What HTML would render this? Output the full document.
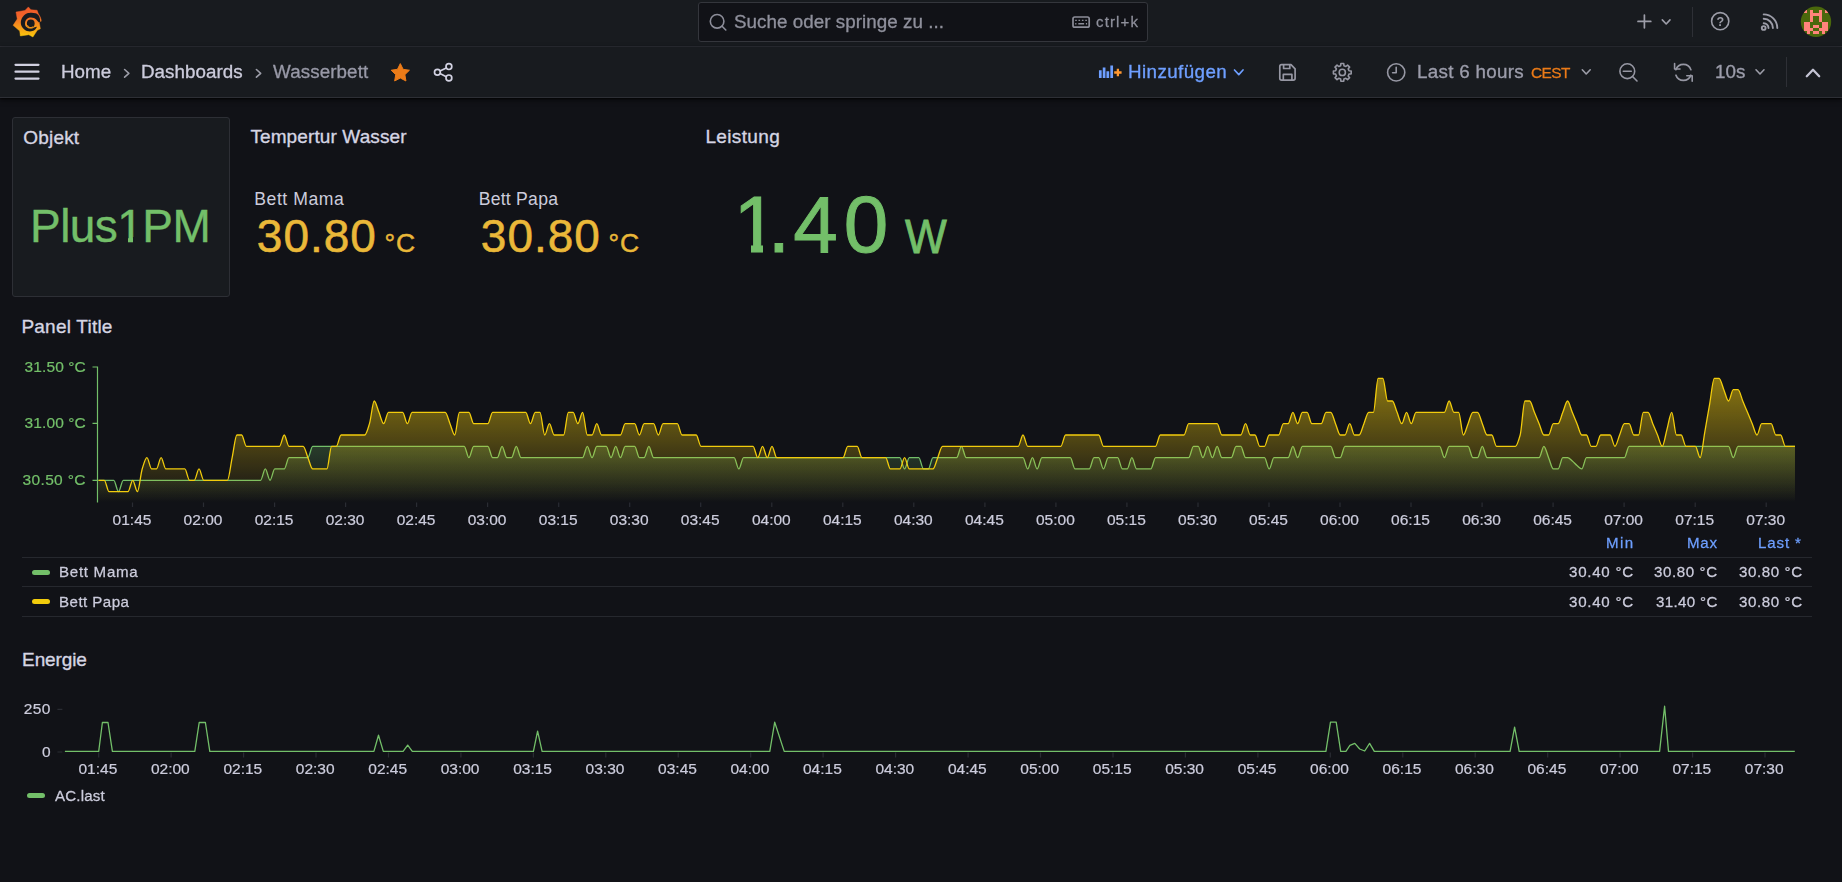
<!DOCTYPE html>
<html lang="de">
<head>
<meta charset="utf-8">
<title>Wasserbett - Dashboards - Grafana</title>
<style>
*{box-sizing:border-box;margin:0;padding:0}
html,body{width:1842px;height:882px;overflow:hidden;background:#111217}
body{font-family:"Liberation Sans",Arial,sans-serif;color:#ccccdc;position:relative}
.abs{position:absolute;white-space:nowrap;line-height:1}
#topbar{position:absolute;left:0;top:0;width:1842px;height:47px;background:#181b1f;border-bottom:1px solid #2d2f35}
#toolbar{position:absolute;left:0;top:47px;width:1842px;height:51px;background:#181b1f;border-bottom:1px solid #2d2f35;box-shadow:0 1px 2px rgba(0,0,0,.7),0 2px 6px rgba(0,0,0,.45)}
#search{position:absolute;left:698px;top:2px;width:450px;height:40px;background:#111217;border:1px solid #34363c;border-radius:3px}
.t{color:#ccccdc}
.dim{color:#9a9ba6}
svg{position:absolute;left:0;top:0;overflow:visible}
.panel{position:absolute;left:12px;top:117px;width:218px;height:180px;background:#181b1f;border:1px solid #2d2f35;border-radius:3px}
.ptitle{font-size:18px;color:#d5d5e3;-webkit-text-stroke:.3px #d5d5e3}
.ax{font-size:15.5px;fill:#ccccdc;stroke:#ccccdc;stroke-width:.22px;font-family:"Liberation Sans",Arial,sans-serif}
.axg{font-size:15.5px;fill:#73bf69;stroke:#73bf69;stroke-width:.22px;font-family:"Liberation Sans",Arial,sans-serif}
.hr{position:absolute;left:22px;width:1790px;height:1px;background:#26282e}
.lg{font-size:15.6px;color:#ccccdc}
.lv{font-size:15.6px;color:#ccccdc;text-align:right;width:120px}
.lh{font-size:15.6px;color:#6e9fff;text-align:right;width:120px;-webkit-text-stroke:.3px #6e9fff}
.pill{position:absolute;width:18px;height:5.4px;border-radius:3px}
.ic{fill:none;stroke:#a4a5b0;stroke-width:1.7;stroke-linecap:round;stroke-linejoin:round}
</style>
</head>
<body>
<div id="topbar"></div>
<div id="toolbar"></div>
<div id="search"></div>

<div class="panel"></div>
<div class="hr" style="top:557px"></div>
<div class="hr" style="top:586px"></div>
<div class="hr" style="top:616px"></div>
<div class="pill" style="left:32px;top:570px;background:#73bf69"></div>
<div class="pill" style="left:32px;top:599px;background:#f2cc0c"></div>
<div class="pill" style="left:27px;top:792.7px;background:#73bf69"></div>
<div class="abs" style="left:61.4px;top:63.0px;font-size:18.8px;color:#ccccdc;letter-spacing:0.03px;-webkit-text-stroke:0.32px #ccccdc;will-change:transform;">Home</div>
<div class="abs" style="left:141.1px;top:63.0px;font-size:18.8px;color:#ccccdc;letter-spacing:0.04px;-webkit-text-stroke:0.32px #ccccdc;will-change:transform;">Dashboards</div>
<div class="abs" style="left:272.8px;top:63.0px;font-size:18.8px;color:#9899a7;letter-spacing:0.10px;-webkit-text-stroke:0.32px #9899a7;will-change:transform;">Wasserbett</div>
<div class="abs" style="left:733.5px;top:13.0px;font-size:18.8px;color:#8f909c;letter-spacing:0.05px;-webkit-text-stroke:0.32px #8f909c;will-change:transform;">Suche oder springe zu ...</div>
<div class="abs" style="left:1096.1px;top:14.0px;font-size:15px;color:#8f909c;letter-spacing:1.14px;-webkit-text-stroke:0.26px #8f909c;will-change:transform;">ctrl+k</div>
<div class="abs" style="left:1128.4px;top:63.0px;font-size:18.8px;color:#6e9fff;letter-spacing:0.41px;-webkit-text-stroke:0.34px #6e9fff;will-change:transform;">Hinzufügen</div>
<div class="abs" style="left:1417.2px;top:63.0px;font-size:18.8px;color:#9c9dab;letter-spacing:0.30px;-webkit-text-stroke:0.34px #9c9dab;will-change:transform;">Last 6 hours</div>
<div class="abs" style="left:1530.7px;top:65.0px;font-size:15.4px;color:#eb7b18;letter-spacing:-0.53px;-webkit-text-stroke:0.28px #eb7b18;will-change:transform;">CEST</div>
<div class="abs" style="left:1714.5px;top:63.0px;font-size:18.8px;color:#9c9dab;-webkit-text-stroke:0.34px #9c9dab;will-change:transform;">10s</div>
<div class="abs" style="left:23.3px;top:128.0px;font-size:19px;color:#d5d5e3;letter-spacing:0.18px;-webkit-text-stroke:0.34px #d5d5e3;">Objekt</div>
<div class="abs" style="left:30.0px;top:203.0px;font-size:46px;color:#73bf69;letter-spacing:-0.55px;-webkit-text-stroke:0.37px #73bf69;">Plus1PM</div>
<div style="position:absolute;left:119px;top:237px;width:9.3px;height:6.5px;background:#181b1f"></div>
<div style="position:absolute;left:133.4px;top:237px;width:9px;height:6.5px;background:#181b1f"></div>
<div class="abs" style="left:250.4px;top:127.0px;font-size:19px;color:#d5d5e3;letter-spacing:0.11px;-webkit-text-stroke:0.34px #d5d5e3;">Tempertur Wasser</div>
<div class="abs" style="left:254.3px;top:191.0px;font-size:17.6px;color:#ccccdc;letter-spacing:0.55px;">Bett Mama</div>
<div class="abs" style="left:478.7px;top:191.0px;font-size:17.6px;color:#ccccdc;letter-spacing:0.25px;">Bett Papa</div>
<div class="abs" style="left:256.8px;top:213.0px;font-size:46px;color:#eab839;letter-spacing:1.00px;-webkit-text-stroke:0.55px #eab839;">30.80<span style="position:absolute;left:127.7px;top:17.0px;font-size:26.5px;letter-spacing:0.80px;line-height:1;-webkit-text-stroke:0.48px #eab839;"> °C</span></div>
<div class="abs" style="left:480.8px;top:213.0px;font-size:46px;color:#eab839;letter-spacing:1.00px;-webkit-text-stroke:0.55px #eab839;">30.80<span style="position:absolute;left:127.7px;top:17.0px;font-size:26.5px;letter-spacing:0.80px;line-height:1;-webkit-text-stroke:0.48px #eab839;"> °C</span></div>
<div class="abs" style="left:705.4px;top:127.0px;font-size:19px;color:#d5d5e3;letter-spacing:0.37px;-webkit-text-stroke:0.34px #d5d5e3;">Leistung</div>
<div class="abs" style="left:733.5px;top:185.0px;font-size:80px;color:#73bf69;-webkit-text-stroke:0.96px #73bf69;"><span style="position:absolute;left:3.2px;top:58.5px;width:14.6px;height:11px;background:#111217;z-index:1"></span><span style="position:absolute;left:29.2px;top:58.5px;width:14px;height:11px;background:#111217;z-index:1"></span>1<span style="position:relative;z-index:2"><span style="margin-left:-10.29px">.</span><span style="margin-left:3.37px">4</span><span style="margin-left:6.01px">0</span></span><span style="position:absolute;left:171.7px;top:28.0px;font-size:47.6px;letter-spacing:0.00px;line-height:1;-webkit-text-stroke:0.86px #73bf69;transform:scaleX(0.93);transform-origin:0 0;"> W</span></div>
<div class="abs" style="left:21.4px;top:317.0px;font-size:19px;color:#d5d5e3;letter-spacing:0.23px;-webkit-text-stroke:0.34px #d5d5e3;">Panel Title</div>
<div class="abs" style="left:22.1px;top:650.0px;font-size:19px;color:#d5d5e3;letter-spacing:-0.13px;-webkit-text-stroke:0.34px #d5d5e3;">Energie</div>
<div class="abs" style="left:58.7px;top:564.0px;font-size:15.1px;color:#ccccdc;letter-spacing:0.71px;-webkit-text-stroke:0.26px #ccccdc;will-change:transform;">Bett Mama</div>
<div class="abs" style="left:59.2px;top:594.0px;font-size:15.1px;color:#ccccdc;letter-spacing:0.46px;-webkit-text-stroke:0.26px #ccccdc;will-change:transform;">Bett Papa</div>
<div class="abs" style="left:55.1px;top:788.0px;font-size:15.1px;color:#ccccdc;letter-spacing:0.19px;-webkit-text-stroke:0.26px #ccccdc;will-change:transform;">AC.last</div>
<div class="abs" style="left:1606.2px;top:535.0px;font-size:15.1px;color:#6e9fff;letter-spacing:1.40px;-webkit-text-stroke:0.27px #6e9fff;will-change:transform;">Min</div>
<div class="abs" style="left:1686.7px;top:535.0px;font-size:15.1px;color:#6e9fff;letter-spacing:0.75px;-webkit-text-stroke:0.27px #6e9fff;will-change:transform;">Max</div>
<div class="abs" style="left:1757.9px;top:535.0px;font-size:15.1px;color:#6e9fff;letter-spacing:0.88px;-webkit-text-stroke:0.27px #6e9fff;will-change:transform;">Last *</div>
<div class="abs" style="left:1569.3px;top:564.0px;font-size:15.1px;color:#ccccdc;letter-spacing:0.74px;-webkit-text-stroke:0.26px #ccccdc;will-change:transform;">30.40 °C</div>
<div class="abs" style="left:1654.4px;top:564.0px;font-size:15.1px;color:#ccccdc;letter-spacing:0.59px;-webkit-text-stroke:0.26px #ccccdc;will-change:transform;">30.80 °C</div>
<div class="abs" style="left:1738.6px;top:564.0px;font-size:15.1px;color:#ccccdc;letter-spacing:0.59px;-webkit-text-stroke:0.26px #ccccdc;will-change:transform;">30.80 °C</div>
<div class="abs" style="left:1569.3px;top:594.0px;font-size:15.1px;color:#ccccdc;letter-spacing:0.74px;-webkit-text-stroke:0.26px #ccccdc;will-change:transform;">30.40 °C</div>
<div class="abs" style="left:1656.2px;top:594.0px;font-size:15.1px;color:#ccccdc;letter-spacing:0.34px;-webkit-text-stroke:0.26px #ccccdc;will-change:transform;">31.40 °C</div>
<div class="abs" style="left:1738.6px;top:594.0px;font-size:15.1px;color:#ccccdc;letter-spacing:0.59px;-webkit-text-stroke:0.26px #ccccdc;will-change:transform;">30.80 °C</div>
<svg id="charts" width="1842" height="882">
<defs>
<linearGradient id="gy" gradientUnits="userSpaceOnUse" x1="0" y1="366" x2="0" y2="502.5"><stop offset="0" stop-color="#F2CC0C" stop-opacity="0.6"/><stop offset="1" stop-color="#F2CC0C" stop-opacity="0"/></linearGradient>
<linearGradient id="gg" gradientUnits="userSpaceOnUse" x1="0" y1="366" x2="0" y2="502.5"><stop offset="0" stop-color="#73BF69" stop-opacity="0.6"/><stop offset="1" stop-color="#73BF69" stop-opacity="0"/></linearGradient>
</defs>
<path d="M98.50,480.30H99.57H113.78C115.35,480.30 116.93,491.63 118.51,491.63C120.09,491.63 121.67,480.30 123.25,480.30H260.57C262.15,480.30 263.73,468.97 265.31,468.97C266.89,468.97 268.47,480.30 270.04,480.30C271.62,480.30 273.20,468.97 274.78,468.97H284.25C285.83,468.97 287.41,457.64 288.99,457.64H307.93C309.51,457.64 311.08,446.31 312.66,446.31H464.20C465.77,446.31 467.35,457.64 468.93,457.64C470.51,457.64 472.09,446.31 473.67,446.31H487.87C489.45,446.31 491.03,457.64 492.61,457.64H497.34C498.92,457.64 500.50,446.31 502.08,446.31C503.66,446.31 505.24,457.64 506.81,457.64H511.55C513.13,457.64 514.71,446.31 516.29,446.31C517.86,446.31 519.44,457.64 521.02,457.64H582.58C584.16,457.64 585.74,446.31 587.32,446.31C588.89,446.31 590.47,457.64 592.05,457.64C593.63,457.64 595.21,446.31 596.79,446.31H606.26C607.84,446.31 609.41,457.64 610.99,457.64C612.57,457.64 614.15,446.31 615.73,446.31C617.31,446.31 618.89,457.64 620.46,457.64C622.04,457.64 623.62,446.31 625.20,446.31H634.67C636.25,446.31 637.83,457.64 639.41,457.64H644.14C645.72,457.64 647.30,446.31 648.88,446.31C650.45,446.31 652.03,457.64 653.61,457.64H734.11C735.69,457.64 737.27,468.97 738.85,468.97C740.43,468.97 742.01,457.64 743.58,457.64H899.85C901.43,457.64 903.01,468.97 904.59,468.97C906.17,468.97 907.74,457.64 909.32,457.64H918.79C920.37,457.64 921.95,468.97 923.53,468.97H928.27C929.84,468.97 931.42,457.64 933.00,457.64H956.68C958.26,457.64 959.83,446.31 961.41,446.31C962.99,446.31 964.57,457.64 966.15,457.64H1022.97C1024.55,457.64 1026.13,468.97 1027.71,468.97C1029.29,468.97 1030.87,457.64 1032.44,457.64C1034.02,457.64 1035.60,468.97 1037.18,468.97C1038.76,468.97 1040.34,457.64 1041.91,457.64H1070.33C1071.91,457.64 1073.48,468.97 1075.06,468.97H1089.27C1090.85,468.97 1092.43,457.64 1094.00,457.64H1098.74C1100.32,457.64 1101.90,468.97 1103.47,468.97C1105.05,468.97 1106.63,457.64 1108.21,457.64H1117.68C1119.26,457.64 1120.84,468.97 1122.42,468.97H1127.15C1128.73,468.97 1130.31,457.64 1131.89,457.64C1133.47,457.64 1135.04,468.97 1136.62,468.97H1150.83C1152.41,468.97 1153.99,457.64 1155.56,457.64H1188.71C1190.29,457.64 1191.87,446.31 1193.45,446.31H1198.18C1199.76,446.31 1201.34,457.64 1202.92,457.64C1204.50,457.64 1206.08,446.31 1207.65,446.31C1209.23,446.31 1210.81,457.64 1212.39,457.64C1213.97,457.64 1215.55,446.31 1217.12,446.31C1218.70,446.31 1220.28,457.64 1221.86,457.64H1231.33C1232.91,457.64 1234.49,446.31 1236.07,446.31H1240.80C1242.38,446.31 1243.96,457.64 1245.54,457.64H1264.48C1266.06,457.64 1267.64,468.97 1269.21,468.97C1270.79,468.97 1272.37,457.64 1273.95,457.64H1288.16C1289.73,457.64 1291.31,446.31 1292.89,446.31C1294.47,446.31 1296.05,457.64 1297.63,457.64C1299.20,457.64 1300.78,446.31 1302.36,446.31H1330.77C1332.35,446.31 1333.93,457.64 1335.51,457.64H1340.24C1341.82,457.64 1343.40,446.31 1344.98,446.31H1439.69C1441.27,446.31 1442.85,457.64 1444.42,457.64C1446.00,457.64 1447.58,446.31 1449.16,446.31H1468.10C1469.68,446.31 1471.26,457.64 1472.84,457.64H1477.57C1479.15,457.64 1480.73,446.31 1482.31,446.31C1483.89,446.31 1485.46,457.64 1487.04,457.64H1539.13C1540.71,457.64 1542.29,446.31 1543.87,446.31C1545.45,446.31 1547.02,453.86 1548.60,457.64C1550.18,461.42 1551.76,468.97 1553.34,468.97H1558.07C1559.65,468.97 1561.23,457.64 1562.81,457.64H1567.54C1569.12,457.64 1570.70,459.74 1572.28,461.04C1573.86,462.33 1575.44,464.28 1577.01,465.57C1578.59,466.87 1580.17,468.97 1581.75,468.97C1583.33,468.97 1584.91,457.64 1586.49,457.64H1624.37C1625.95,457.64 1627.53,446.31 1629.10,446.31H1728.55C1730.13,446.31 1731.70,457.64 1733.28,457.64C1734.86,457.64 1736.44,446.31 1738.02,446.31H1794.84H1795.00V502.5H98.50Z" fill="url(#gg)"/>
<path d="M98.50,480.30H99.57H113.78C115.35,480.30 116.93,491.63 118.51,491.63C120.09,491.63 121.67,480.30 123.25,480.30H260.57C262.15,480.30 263.73,468.97 265.31,468.97C266.89,468.97 268.47,480.30 270.04,480.30C271.62,480.30 273.20,468.97 274.78,468.97H284.25C285.83,468.97 287.41,457.64 288.99,457.64H307.93C309.51,457.64 311.08,446.31 312.66,446.31H464.20C465.77,446.31 467.35,457.64 468.93,457.64C470.51,457.64 472.09,446.31 473.67,446.31H487.87C489.45,446.31 491.03,457.64 492.61,457.64H497.34C498.92,457.64 500.50,446.31 502.08,446.31C503.66,446.31 505.24,457.64 506.81,457.64H511.55C513.13,457.64 514.71,446.31 516.29,446.31C517.86,446.31 519.44,457.64 521.02,457.64H582.58C584.16,457.64 585.74,446.31 587.32,446.31C588.89,446.31 590.47,457.64 592.05,457.64C593.63,457.64 595.21,446.31 596.79,446.31H606.26C607.84,446.31 609.41,457.64 610.99,457.64C612.57,457.64 614.15,446.31 615.73,446.31C617.31,446.31 618.89,457.64 620.46,457.64C622.04,457.64 623.62,446.31 625.20,446.31H634.67C636.25,446.31 637.83,457.64 639.41,457.64H644.14C645.72,457.64 647.30,446.31 648.88,446.31C650.45,446.31 652.03,457.64 653.61,457.64H734.11C735.69,457.64 737.27,468.97 738.85,468.97C740.43,468.97 742.01,457.64 743.58,457.64H899.85C901.43,457.64 903.01,468.97 904.59,468.97C906.17,468.97 907.74,457.64 909.32,457.64H918.79C920.37,457.64 921.95,468.97 923.53,468.97H928.27C929.84,468.97 931.42,457.64 933.00,457.64H956.68C958.26,457.64 959.83,446.31 961.41,446.31C962.99,446.31 964.57,457.64 966.15,457.64H1022.97C1024.55,457.64 1026.13,468.97 1027.71,468.97C1029.29,468.97 1030.87,457.64 1032.44,457.64C1034.02,457.64 1035.60,468.97 1037.18,468.97C1038.76,468.97 1040.34,457.64 1041.91,457.64H1070.33C1071.91,457.64 1073.48,468.97 1075.06,468.97H1089.27C1090.85,468.97 1092.43,457.64 1094.00,457.64H1098.74C1100.32,457.64 1101.90,468.97 1103.47,468.97C1105.05,468.97 1106.63,457.64 1108.21,457.64H1117.68C1119.26,457.64 1120.84,468.97 1122.42,468.97H1127.15C1128.73,468.97 1130.31,457.64 1131.89,457.64C1133.47,457.64 1135.04,468.97 1136.62,468.97H1150.83C1152.41,468.97 1153.99,457.64 1155.56,457.64H1188.71C1190.29,457.64 1191.87,446.31 1193.45,446.31H1198.18C1199.76,446.31 1201.34,457.64 1202.92,457.64C1204.50,457.64 1206.08,446.31 1207.65,446.31C1209.23,446.31 1210.81,457.64 1212.39,457.64C1213.97,457.64 1215.55,446.31 1217.12,446.31C1218.70,446.31 1220.28,457.64 1221.86,457.64H1231.33C1232.91,457.64 1234.49,446.31 1236.07,446.31H1240.80C1242.38,446.31 1243.96,457.64 1245.54,457.64H1264.48C1266.06,457.64 1267.64,468.97 1269.21,468.97C1270.79,468.97 1272.37,457.64 1273.95,457.64H1288.16C1289.73,457.64 1291.31,446.31 1292.89,446.31C1294.47,446.31 1296.05,457.64 1297.63,457.64C1299.20,457.64 1300.78,446.31 1302.36,446.31H1330.77C1332.35,446.31 1333.93,457.64 1335.51,457.64H1340.24C1341.82,457.64 1343.40,446.31 1344.98,446.31H1439.69C1441.27,446.31 1442.85,457.64 1444.42,457.64C1446.00,457.64 1447.58,446.31 1449.16,446.31H1468.10C1469.68,446.31 1471.26,457.64 1472.84,457.64H1477.57C1479.15,457.64 1480.73,446.31 1482.31,446.31C1483.89,446.31 1485.46,457.64 1487.04,457.64H1539.13C1540.71,457.64 1542.29,446.31 1543.87,446.31C1545.45,446.31 1547.02,453.86 1548.60,457.64C1550.18,461.42 1551.76,468.97 1553.34,468.97H1558.07C1559.65,468.97 1561.23,457.64 1562.81,457.64H1567.54C1569.12,457.64 1570.70,459.74 1572.28,461.04C1573.86,462.33 1575.44,464.28 1577.01,465.57C1578.59,466.87 1580.17,468.97 1581.75,468.97C1583.33,468.97 1584.91,457.64 1586.49,457.64H1624.37C1625.95,457.64 1627.53,446.31 1629.10,446.31H1728.55C1730.13,446.31 1731.70,457.64 1733.28,457.64C1734.86,457.64 1736.44,446.31 1738.02,446.31H1794.84H1795.00" fill="none" stroke="#73BF69" stroke-width="1.3" stroke-linejoin="round"/>
<path d="M98.50,480.30H99.57H104.31C105.88,480.30 107.46,491.63 109.04,491.63H127.98C129.56,491.63 131.14,480.30 132.72,480.30C134.30,480.30 135.87,491.63 137.45,491.63C139.03,491.63 140.61,474.01 142.19,468.97C143.77,463.93 145.35,457.64 146.92,457.64C148.50,457.64 150.08,468.97 151.66,468.97H156.39C157.97,468.97 159.55,457.64 161.13,457.64C162.71,457.64 164.29,468.97 165.87,468.97H184.81C186.39,468.97 187.96,480.30 189.54,480.30H194.28C195.86,480.30 197.43,468.97 199.01,468.97C200.59,468.97 202.17,480.30 203.75,480.30H227.43C229.00,480.30 230.58,465.19 232.16,457.64C233.74,450.09 235.32,434.98 236.90,434.98H241.63C243.21,434.98 244.79,446.31 246.37,446.31H279.52C281.09,446.31 282.67,434.98 284.25,434.98C285.83,434.98 287.41,446.31 288.99,446.31H303.19C304.77,446.31 306.35,453.86 307.93,457.64C309.51,461.42 311.08,468.97 312.66,468.97H326.87C328.45,468.97 330.03,446.31 331.60,446.31H336.34C337.92,446.31 339.50,434.98 341.08,434.98H364.75C366.33,434.98 367.91,428.69 369.49,423.65C371.07,418.61 372.64,400.99 374.22,400.99C375.80,400.99 377.38,408.54 378.96,412.32C380.54,416.10 382.12,423.65 383.69,423.65C385.27,423.65 386.85,412.32 388.43,412.32H402.64C404.21,412.32 405.79,423.65 407.37,423.65C408.95,423.65 410.53,412.32 412.11,412.32H445.25C446.83,412.32 448.41,419.87 449.99,423.65C451.57,427.43 453.15,434.98 454.73,434.98C456.30,434.98 457.88,412.32 459.46,412.32H468.93C470.51,412.32 472.09,423.65 473.67,423.65H487.87C489.45,423.65 491.03,412.32 492.61,412.32H525.76C527.33,412.32 528.91,423.65 530.49,423.65C532.07,423.65 533.65,412.32 535.23,412.32H539.96C541.54,412.32 543.12,434.98 544.70,434.98C546.28,434.98 547.85,423.65 549.43,423.65C551.01,423.65 552.59,434.98 554.17,434.98H563.64C565.22,434.98 566.80,412.32 568.37,412.32H573.11C574.69,412.32 576.27,423.65 577.85,423.65C579.42,423.65 581.00,412.32 582.58,412.32C584.16,412.32 585.74,434.98 587.32,434.98H592.05C593.63,434.98 595.21,423.65 596.79,423.65C598.37,423.65 599.94,434.98 601.52,434.98H620.46C622.04,434.98 623.62,423.65 625.20,423.65H634.67C636.25,423.65 637.83,434.98 639.41,434.98C640.98,434.98 642.56,423.65 644.14,423.65H653.61C655.19,423.65 656.77,434.98 658.35,434.98C659.93,434.98 661.50,423.65 663.08,423.65H677.29C678.87,423.65 680.45,434.98 682.02,434.98H696.23C697.81,434.98 699.39,446.31 700.97,446.31H753.06C754.63,446.31 756.21,457.64 757.79,457.64C759.37,457.64 760.95,446.31 762.53,446.31C764.10,446.31 765.68,457.64 767.26,457.64C768.84,457.64 770.42,446.31 772.00,446.31C773.58,446.31 775.15,457.64 776.73,457.64H843.03C844.61,457.64 846.18,446.31 847.76,446.31H857.23C858.81,446.31 860.39,457.64 861.97,457.64H885.65C887.22,457.64 888.80,468.97 890.38,468.97H899.85C901.43,468.97 903.01,457.64 904.59,457.64C906.17,457.64 907.74,468.97 909.32,468.97H933.00C934.58,468.97 936.16,461.42 937.74,457.64C939.31,453.86 940.89,446.31 942.47,446.31H1018.24C1019.82,446.31 1021.39,434.98 1022.97,434.98C1024.55,434.98 1026.13,446.31 1027.71,446.31H1060.86C1062.43,446.31 1064.01,434.98 1065.59,434.98H1098.74C1100.32,434.98 1101.90,446.31 1103.47,446.31H1155.56C1157.14,446.31 1158.72,434.98 1160.30,434.98H1183.98C1185.56,434.98 1187.13,423.65 1188.71,423.65H1217.12C1218.70,423.65 1220.28,434.98 1221.86,434.98H1240.80C1242.38,434.98 1243.96,423.65 1245.54,423.65C1247.12,423.65 1248.69,434.98 1250.27,434.98H1255.01C1256.59,434.98 1258.16,446.31 1259.74,446.31H1264.48C1266.06,446.31 1267.64,434.98 1269.21,434.98H1278.68C1280.26,434.98 1281.84,423.65 1283.42,423.65H1288.16C1289.73,423.65 1291.31,412.32 1292.89,412.32C1294.47,412.32 1296.05,423.65 1297.63,423.65C1299.20,423.65 1300.78,412.32 1302.36,412.32H1307.10C1308.68,412.32 1310.25,423.65 1311.83,423.65H1321.30C1322.88,423.65 1324.46,412.32 1326.04,412.32H1330.77C1332.35,412.32 1333.93,419.87 1335.51,423.65C1337.09,427.43 1338.67,434.98 1340.24,434.98H1344.98C1346.56,434.98 1348.14,423.65 1349.72,423.65C1351.29,423.65 1352.87,434.98 1354.45,434.98H1359.19C1360.76,434.98 1362.34,427.43 1363.92,423.65C1365.50,419.87 1367.08,412.32 1368.66,412.32H1373.39C1374.97,412.32 1376.55,378.33 1378.13,378.33H1382.86C1384.44,378.33 1386.02,400.99 1387.60,400.99H1392.33C1393.91,400.99 1395.49,408.54 1397.07,412.32C1398.65,416.10 1400.23,423.65 1401.81,423.65C1403.38,423.65 1404.96,412.32 1406.54,412.32C1408.12,412.32 1409.70,423.65 1411.28,423.65C1412.85,423.65 1414.43,412.32 1416.01,412.32H1444.42C1446.00,412.32 1447.58,400.99 1449.16,400.99C1450.74,400.99 1452.32,412.32 1453.89,412.32H1458.63C1460.21,412.32 1461.79,434.98 1463.37,434.98C1464.94,434.98 1466.52,427.43 1468.10,423.65C1469.68,419.87 1471.26,412.32 1472.84,412.32H1477.57C1479.15,412.32 1480.73,419.87 1482.31,423.65C1483.89,427.43 1485.46,434.98 1487.04,434.98H1491.78C1493.36,434.98 1494.93,446.31 1496.51,446.31H1515.45C1517.03,446.31 1518.61,440.65 1520.19,434.98C1521.77,429.32 1523.35,400.99 1524.93,400.99H1529.66C1531.24,400.99 1532.82,408.54 1534.40,412.32C1535.97,416.10 1537.55,419.87 1539.13,423.65C1540.71,427.43 1542.29,434.98 1543.87,434.98H1548.60C1550.18,434.98 1551.76,423.65 1553.34,423.65H1558.07C1559.65,423.65 1561.23,416.10 1562.81,412.32C1564.39,408.54 1565.97,400.99 1567.54,400.99C1569.12,400.99 1570.70,408.54 1572.28,412.32C1573.86,416.10 1575.44,419.87 1577.01,423.65C1578.59,427.43 1580.17,434.98 1581.75,434.98H1586.49C1588.06,434.98 1589.64,446.31 1591.22,446.31H1595.96C1597.53,446.31 1599.11,434.98 1600.69,434.98H1610.16C1611.74,434.98 1613.32,446.31 1614.90,446.31C1616.48,446.31 1618.05,438.76 1619.63,434.98C1621.21,431.20 1622.79,423.65 1624.37,423.65H1629.10C1630.68,423.65 1632.26,434.98 1633.84,434.98H1638.58C1640.15,434.98 1641.73,412.32 1643.31,412.32H1648.05C1649.62,412.32 1651.20,419.87 1652.78,423.65C1654.36,427.43 1655.94,431.20 1657.52,434.98C1659.10,438.76 1660.67,446.31 1662.25,446.31C1663.83,446.31 1665.41,434.98 1666.99,429.32C1668.57,423.65 1670.14,412.32 1671.72,412.32C1673.30,412.32 1674.88,434.98 1676.46,434.98H1681.19C1682.77,434.98 1684.35,446.31 1685.93,446.31H1695.40C1696.98,446.31 1698.56,457.64 1700.14,457.64C1701.71,457.64 1703.29,440.45 1704.87,431.58C1706.45,422.71 1708.03,413.26 1709.61,404.39C1711.18,395.52 1712.76,378.33 1714.34,378.33H1719.08C1720.66,378.33 1722.23,385.88 1723.81,389.66C1725.39,393.44 1726.97,400.99 1728.55,400.99C1730.13,400.99 1731.70,389.66 1733.28,389.66H1738.02C1739.60,389.66 1741.18,397.21 1742.75,400.99C1744.33,404.77 1745.91,408.54 1747.49,412.32C1749.07,416.10 1750.65,419.87 1752.22,423.65C1753.80,427.43 1755.38,434.98 1756.96,434.98C1758.54,434.98 1760.12,423.65 1761.70,423.65H1771.17C1772.74,423.65 1774.32,434.98 1775.90,434.98H1780.64C1782.22,434.98 1783.79,446.31 1785.37,446.31H1794.84H1795.00V502.5H98.50Z" fill="url(#gy)"/>
<path d="M98.50,480.30H99.57H104.31C105.88,480.30 107.46,491.63 109.04,491.63H127.98C129.56,491.63 131.14,480.30 132.72,480.30C134.30,480.30 135.87,491.63 137.45,491.63C139.03,491.63 140.61,474.01 142.19,468.97C143.77,463.93 145.35,457.64 146.92,457.64C148.50,457.64 150.08,468.97 151.66,468.97H156.39C157.97,468.97 159.55,457.64 161.13,457.64C162.71,457.64 164.29,468.97 165.87,468.97H184.81C186.39,468.97 187.96,480.30 189.54,480.30H194.28C195.86,480.30 197.43,468.97 199.01,468.97C200.59,468.97 202.17,480.30 203.75,480.30H227.43C229.00,480.30 230.58,465.19 232.16,457.64C233.74,450.09 235.32,434.98 236.90,434.98H241.63C243.21,434.98 244.79,446.31 246.37,446.31H279.52C281.09,446.31 282.67,434.98 284.25,434.98C285.83,434.98 287.41,446.31 288.99,446.31H303.19C304.77,446.31 306.35,453.86 307.93,457.64C309.51,461.42 311.08,468.97 312.66,468.97H326.87C328.45,468.97 330.03,446.31 331.60,446.31H336.34C337.92,446.31 339.50,434.98 341.08,434.98H364.75C366.33,434.98 367.91,428.69 369.49,423.65C371.07,418.61 372.64,400.99 374.22,400.99C375.80,400.99 377.38,408.54 378.96,412.32C380.54,416.10 382.12,423.65 383.69,423.65C385.27,423.65 386.85,412.32 388.43,412.32H402.64C404.21,412.32 405.79,423.65 407.37,423.65C408.95,423.65 410.53,412.32 412.11,412.32H445.25C446.83,412.32 448.41,419.87 449.99,423.65C451.57,427.43 453.15,434.98 454.73,434.98C456.30,434.98 457.88,412.32 459.46,412.32H468.93C470.51,412.32 472.09,423.65 473.67,423.65H487.87C489.45,423.65 491.03,412.32 492.61,412.32H525.76C527.33,412.32 528.91,423.65 530.49,423.65C532.07,423.65 533.65,412.32 535.23,412.32H539.96C541.54,412.32 543.12,434.98 544.70,434.98C546.28,434.98 547.85,423.65 549.43,423.65C551.01,423.65 552.59,434.98 554.17,434.98H563.64C565.22,434.98 566.80,412.32 568.37,412.32H573.11C574.69,412.32 576.27,423.65 577.85,423.65C579.42,423.65 581.00,412.32 582.58,412.32C584.16,412.32 585.74,434.98 587.32,434.98H592.05C593.63,434.98 595.21,423.65 596.79,423.65C598.37,423.65 599.94,434.98 601.52,434.98H620.46C622.04,434.98 623.62,423.65 625.20,423.65H634.67C636.25,423.65 637.83,434.98 639.41,434.98C640.98,434.98 642.56,423.65 644.14,423.65H653.61C655.19,423.65 656.77,434.98 658.35,434.98C659.93,434.98 661.50,423.65 663.08,423.65H677.29C678.87,423.65 680.45,434.98 682.02,434.98H696.23C697.81,434.98 699.39,446.31 700.97,446.31H753.06C754.63,446.31 756.21,457.64 757.79,457.64C759.37,457.64 760.95,446.31 762.53,446.31C764.10,446.31 765.68,457.64 767.26,457.64C768.84,457.64 770.42,446.31 772.00,446.31C773.58,446.31 775.15,457.64 776.73,457.64H843.03C844.61,457.64 846.18,446.31 847.76,446.31H857.23C858.81,446.31 860.39,457.64 861.97,457.64H885.65C887.22,457.64 888.80,468.97 890.38,468.97H899.85C901.43,468.97 903.01,457.64 904.59,457.64C906.17,457.64 907.74,468.97 909.32,468.97H933.00C934.58,468.97 936.16,461.42 937.74,457.64C939.31,453.86 940.89,446.31 942.47,446.31H1018.24C1019.82,446.31 1021.39,434.98 1022.97,434.98C1024.55,434.98 1026.13,446.31 1027.71,446.31H1060.86C1062.43,446.31 1064.01,434.98 1065.59,434.98H1098.74C1100.32,434.98 1101.90,446.31 1103.47,446.31H1155.56C1157.14,446.31 1158.72,434.98 1160.30,434.98H1183.98C1185.56,434.98 1187.13,423.65 1188.71,423.65H1217.12C1218.70,423.65 1220.28,434.98 1221.86,434.98H1240.80C1242.38,434.98 1243.96,423.65 1245.54,423.65C1247.12,423.65 1248.69,434.98 1250.27,434.98H1255.01C1256.59,434.98 1258.16,446.31 1259.74,446.31H1264.48C1266.06,446.31 1267.64,434.98 1269.21,434.98H1278.68C1280.26,434.98 1281.84,423.65 1283.42,423.65H1288.16C1289.73,423.65 1291.31,412.32 1292.89,412.32C1294.47,412.32 1296.05,423.65 1297.63,423.65C1299.20,423.65 1300.78,412.32 1302.36,412.32H1307.10C1308.68,412.32 1310.25,423.65 1311.83,423.65H1321.30C1322.88,423.65 1324.46,412.32 1326.04,412.32H1330.77C1332.35,412.32 1333.93,419.87 1335.51,423.65C1337.09,427.43 1338.67,434.98 1340.24,434.98H1344.98C1346.56,434.98 1348.14,423.65 1349.72,423.65C1351.29,423.65 1352.87,434.98 1354.45,434.98H1359.19C1360.76,434.98 1362.34,427.43 1363.92,423.65C1365.50,419.87 1367.08,412.32 1368.66,412.32H1373.39C1374.97,412.32 1376.55,378.33 1378.13,378.33H1382.86C1384.44,378.33 1386.02,400.99 1387.60,400.99H1392.33C1393.91,400.99 1395.49,408.54 1397.07,412.32C1398.65,416.10 1400.23,423.65 1401.81,423.65C1403.38,423.65 1404.96,412.32 1406.54,412.32C1408.12,412.32 1409.70,423.65 1411.28,423.65C1412.85,423.65 1414.43,412.32 1416.01,412.32H1444.42C1446.00,412.32 1447.58,400.99 1449.16,400.99C1450.74,400.99 1452.32,412.32 1453.89,412.32H1458.63C1460.21,412.32 1461.79,434.98 1463.37,434.98C1464.94,434.98 1466.52,427.43 1468.10,423.65C1469.68,419.87 1471.26,412.32 1472.84,412.32H1477.57C1479.15,412.32 1480.73,419.87 1482.31,423.65C1483.89,427.43 1485.46,434.98 1487.04,434.98H1491.78C1493.36,434.98 1494.93,446.31 1496.51,446.31H1515.45C1517.03,446.31 1518.61,440.65 1520.19,434.98C1521.77,429.32 1523.35,400.99 1524.93,400.99H1529.66C1531.24,400.99 1532.82,408.54 1534.40,412.32C1535.97,416.10 1537.55,419.87 1539.13,423.65C1540.71,427.43 1542.29,434.98 1543.87,434.98H1548.60C1550.18,434.98 1551.76,423.65 1553.34,423.65H1558.07C1559.65,423.65 1561.23,416.10 1562.81,412.32C1564.39,408.54 1565.97,400.99 1567.54,400.99C1569.12,400.99 1570.70,408.54 1572.28,412.32C1573.86,416.10 1575.44,419.87 1577.01,423.65C1578.59,427.43 1580.17,434.98 1581.75,434.98H1586.49C1588.06,434.98 1589.64,446.31 1591.22,446.31H1595.96C1597.53,446.31 1599.11,434.98 1600.69,434.98H1610.16C1611.74,434.98 1613.32,446.31 1614.90,446.31C1616.48,446.31 1618.05,438.76 1619.63,434.98C1621.21,431.20 1622.79,423.65 1624.37,423.65H1629.10C1630.68,423.65 1632.26,434.98 1633.84,434.98H1638.58C1640.15,434.98 1641.73,412.32 1643.31,412.32H1648.05C1649.62,412.32 1651.20,419.87 1652.78,423.65C1654.36,427.43 1655.94,431.20 1657.52,434.98C1659.10,438.76 1660.67,446.31 1662.25,446.31C1663.83,446.31 1665.41,434.98 1666.99,429.32C1668.57,423.65 1670.14,412.32 1671.72,412.32C1673.30,412.32 1674.88,434.98 1676.46,434.98H1681.19C1682.77,434.98 1684.35,446.31 1685.93,446.31H1695.40C1696.98,446.31 1698.56,457.64 1700.14,457.64C1701.71,457.64 1703.29,440.45 1704.87,431.58C1706.45,422.71 1708.03,413.26 1709.61,404.39C1711.18,395.52 1712.76,378.33 1714.34,378.33H1719.08C1720.66,378.33 1722.23,385.88 1723.81,389.66C1725.39,393.44 1726.97,400.99 1728.55,400.99C1730.13,400.99 1731.70,389.66 1733.28,389.66H1738.02C1739.60,389.66 1741.18,397.21 1742.75,400.99C1744.33,404.77 1745.91,408.54 1747.49,412.32C1749.07,416.10 1750.65,419.87 1752.22,423.65C1753.80,427.43 1755.38,434.98 1756.96,434.98C1758.54,434.98 1760.12,423.65 1761.70,423.65H1771.17C1772.74,423.65 1774.32,434.98 1775.90,434.98H1780.64C1782.22,434.98 1783.79,446.31 1785.37,446.31H1794.84H1795.00" fill="none" stroke="#F2CC0C" stroke-width="1.3" stroke-linejoin="round"/>
<path d="M132.5,502.5v4.5" stroke="#2a2c33" stroke-width="1.2"/>
<text class="ax" x="132.0" y="525" text-anchor="middle">01:45</text>
<path d="M203.5,502.5v4.5" stroke="#2a2c33" stroke-width="1.2"/>
<text class="ax" x="203.0" y="525" text-anchor="middle">02:00</text>
<path d="M274.6,502.5v4.5" stroke="#2a2c33" stroke-width="1.2"/>
<text class="ax" x="274.1" y="525" text-anchor="middle">02:15</text>
<path d="M345.6,502.5v4.5" stroke="#2a2c33" stroke-width="1.2"/>
<text class="ax" x="345.1" y="525" text-anchor="middle">02:30</text>
<path d="M416.6,502.5v4.5" stroke="#2a2c33" stroke-width="1.2"/>
<text class="ax" x="416.1" y="525" text-anchor="middle">02:45</text>
<path d="M487.6,502.5v4.5" stroke="#2a2c33" stroke-width="1.2"/>
<text class="ax" x="487.1" y="525" text-anchor="middle">03:00</text>
<path d="M558.7,502.5v4.5" stroke="#2a2c33" stroke-width="1.2"/>
<text class="ax" x="558.2" y="525" text-anchor="middle">03:15</text>
<path d="M629.7,502.5v4.5" stroke="#2a2c33" stroke-width="1.2"/>
<text class="ax" x="629.2" y="525" text-anchor="middle">03:30</text>
<path d="M700.7,502.5v4.5" stroke="#2a2c33" stroke-width="1.2"/>
<text class="ax" x="700.2" y="525" text-anchor="middle">03:45</text>
<path d="M771.8,502.5v4.5" stroke="#2a2c33" stroke-width="1.2"/>
<text class="ax" x="771.3" y="525" text-anchor="middle">04:00</text>
<path d="M842.8,502.5v4.5" stroke="#2a2c33" stroke-width="1.2"/>
<text class="ax" x="842.3" y="525" text-anchor="middle">04:15</text>
<path d="M913.8,502.5v4.5" stroke="#2a2c33" stroke-width="1.2"/>
<text class="ax" x="913.3" y="525" text-anchor="middle">04:30</text>
<path d="M984.9,502.5v4.5" stroke="#2a2c33" stroke-width="1.2"/>
<text class="ax" x="984.4" y="525" text-anchor="middle">04:45</text>
<path d="M1055.9,502.5v4.5" stroke="#2a2c33" stroke-width="1.2"/>
<text class="ax" x="1055.4" y="525" text-anchor="middle">05:00</text>
<path d="M1126.9,502.5v4.5" stroke="#2a2c33" stroke-width="1.2"/>
<text class="ax" x="1126.4" y="525" text-anchor="middle">05:15</text>
<path d="M1198.0,502.5v4.5" stroke="#2a2c33" stroke-width="1.2"/>
<text class="ax" x="1197.5" y="525" text-anchor="middle">05:30</text>
<path d="M1269.0,502.5v4.5" stroke="#2a2c33" stroke-width="1.2"/>
<text class="ax" x="1268.5" y="525" text-anchor="middle">05:45</text>
<path d="M1340.0,502.5v4.5" stroke="#2a2c33" stroke-width="1.2"/>
<text class="ax" x="1339.5" y="525" text-anchor="middle">06:00</text>
<path d="M1411.0,502.5v4.5" stroke="#2a2c33" stroke-width="1.2"/>
<text class="ax" x="1410.5" y="525" text-anchor="middle">06:15</text>
<path d="M1482.1,502.5v4.5" stroke="#2a2c33" stroke-width="1.2"/>
<text class="ax" x="1481.6" y="525" text-anchor="middle">06:30</text>
<path d="M1553.1,502.5v4.5" stroke="#2a2c33" stroke-width="1.2"/>
<text class="ax" x="1552.6" y="525" text-anchor="middle">06:45</text>
<path d="M1624.1,502.5v4.5" stroke="#2a2c33" stroke-width="1.2"/>
<text class="ax" x="1623.6" y="525" text-anchor="middle">07:00</text>
<path d="M1695.2,502.5v4.5" stroke="#2a2c33" stroke-width="1.2"/>
<text class="ax" x="1694.7" y="525" text-anchor="middle">07:15</text>
<path d="M1766.2,502.5v4.5" stroke="#2a2c33" stroke-width="1.2"/>
<text class="ax" x="1765.7" y="525" text-anchor="middle">07:30</text>
<path d="M97.5,366.5V502.5M92.5,367h5M92.5,423.4h5M92.5,480.3h5" stroke="#73BF69" stroke-width="1.2" fill="none"/>
<text class="axg" x="85.9" y="372.0" text-anchor="end" letter-spacing="0.1">31.50 °C</text>
<text class="axg" x="85.9" y="428.4" text-anchor="end" letter-spacing="0.1">31.00 °C</text>
<text class="axg" x="85.9" y="485.3" text-anchor="end" letter-spacing="0.36">30.50 °C</text>
<path d="M64.9,751.4L98.7,751.4L102.4,722.5L108.0,722.5L112.4,751.4L194.8,751.4L199.2,722.5L205.4,722.5L209.8,751.4L373.9,751.4L378.5,735.2L383.3,751.4L403.1,751.4L407.7,745.1L412.3,751.4L533.4,751.4L537.6,731.2L542.1,751.4L769.8,751.4L774.7,722.2L784.2,751.4L1325.9,751.4L1330.5,722.2L1336.2,722.2L1340.7,751.4L1345.9,751.4L1349.9,745.4L1354.8,743.4L1359.7,749.0L1364.7,751.0L1369.6,743.4L1374.3,751.4L1510.1,751.4L1514.6,727.1L1519.2,751.4L1659.6,751.4L1664.6,706.2L1668.5,751.4L1794.8,751.4" fill="none" stroke="#73BF69" stroke-width="1.3" stroke-linejoin="round"/>
<path d="M98.7,752.5v5" stroke="#2a2c33" stroke-width="1.2"/>
<text class="ax" x="97.9" y="774.3" text-anchor="middle">01:45</text>
<path d="M171.1,752.5v5" stroke="#2a2c33" stroke-width="1.2"/>
<text class="ax" x="170.3" y="774.3" text-anchor="middle">02:00</text>
<path d="M243.6,752.5v5" stroke="#2a2c33" stroke-width="1.2"/>
<text class="ax" x="242.8" y="774.3" text-anchor="middle">02:15</text>
<path d="M316.0,752.5v5" stroke="#2a2c33" stroke-width="1.2"/>
<text class="ax" x="315.2" y="774.3" text-anchor="middle">02:30</text>
<path d="M388.5,752.5v5" stroke="#2a2c33" stroke-width="1.2"/>
<text class="ax" x="387.7" y="774.3" text-anchor="middle">02:45</text>
<path d="M460.9,752.5v5" stroke="#2a2c33" stroke-width="1.2"/>
<text class="ax" x="460.1" y="774.3" text-anchor="middle">03:00</text>
<path d="M533.4,752.5v5" stroke="#2a2c33" stroke-width="1.2"/>
<text class="ax" x="532.6" y="774.3" text-anchor="middle">03:15</text>
<path d="M605.8,752.5v5" stroke="#2a2c33" stroke-width="1.2"/>
<text class="ax" x="605.0" y="774.3" text-anchor="middle">03:30</text>
<path d="M678.2,752.5v5" stroke="#2a2c33" stroke-width="1.2"/>
<text class="ax" x="677.5" y="774.3" text-anchor="middle">03:45</text>
<path d="M750.7,752.5v5" stroke="#2a2c33" stroke-width="1.2"/>
<text class="ax" x="749.9" y="774.3" text-anchor="middle">04:00</text>
<path d="M823.1,752.5v5" stroke="#2a2c33" stroke-width="1.2"/>
<text class="ax" x="822.4" y="774.3" text-anchor="middle">04:15</text>
<path d="M895.6,752.5v5" stroke="#2a2c33" stroke-width="1.2"/>
<text class="ax" x="894.8" y="774.3" text-anchor="middle">04:30</text>
<path d="M968.1,752.5v5" stroke="#2a2c33" stroke-width="1.2"/>
<text class="ax" x="967.3" y="774.3" text-anchor="middle">04:45</text>
<path d="M1040.5,752.5v5" stroke="#2a2c33" stroke-width="1.2"/>
<text class="ax" x="1039.7" y="774.3" text-anchor="middle">05:00</text>
<path d="M1113.0,752.5v5" stroke="#2a2c33" stroke-width="1.2"/>
<text class="ax" x="1112.2" y="774.3" text-anchor="middle">05:15</text>
<path d="M1185.4,752.5v5" stroke="#2a2c33" stroke-width="1.2"/>
<text class="ax" x="1184.6" y="774.3" text-anchor="middle">05:30</text>
<path d="M1257.9,752.5v5" stroke="#2a2c33" stroke-width="1.2"/>
<text class="ax" x="1257.1" y="774.3" text-anchor="middle">05:45</text>
<path d="M1330.3,752.5v5" stroke="#2a2c33" stroke-width="1.2"/>
<text class="ax" x="1329.5" y="774.3" text-anchor="middle">06:00</text>
<path d="M1402.8,752.5v5" stroke="#2a2c33" stroke-width="1.2"/>
<text class="ax" x="1402.0" y="774.3" text-anchor="middle">06:15</text>
<path d="M1475.2,752.5v5" stroke="#2a2c33" stroke-width="1.2"/>
<text class="ax" x="1474.4" y="774.3" text-anchor="middle">06:30</text>
<path d="M1547.7,752.5v5" stroke="#2a2c33" stroke-width="1.2"/>
<text class="ax" x="1546.9" y="774.3" text-anchor="middle">06:45</text>
<path d="M1620.1,752.5v5" stroke="#2a2c33" stroke-width="1.2"/>
<text class="ax" x="1619.3" y="774.3" text-anchor="middle">07:00</text>
<path d="M1692.6,752.5v5" stroke="#2a2c33" stroke-width="1.2"/>
<text class="ax" x="1691.8" y="774.3" text-anchor="middle">07:15</text>
<path d="M1765.0,752.5v5" stroke="#2a2c33" stroke-width="1.2"/>
<text class="ax" x="1764.2" y="774.3" text-anchor="middle">07:30</text>
<path d="M57.4,709.4h5M57.4,752h5" stroke="#2a2c33" stroke-width="1.2"/>
<text class="ax" x="50.8" y="714.2" text-anchor="end" letter-spacing="0.4">250</text>
<text class="ax" x="50.6" y="757.3" text-anchor="end">0</text>
</svg>
<svg id="icons" width="1842" height="98">
<defs><linearGradient id="lg" x1="0" y1="105" x2="0" y2="775" gradientUnits="userSpaceOnUse"><stop offset="0" stop-color="#f05a28"/><stop offset="0.3" stop-color="#f1632a"/><stop offset="1" stop-color="#fbca0a"/></linearGradient></defs>
<g transform="translate(10,2) scale(0.04533)">
<path d="M405,108 L462,172 L598,182 L622,250 L668,330 L690,400 L680,435 L655,400 L648,470 L670,590 L602,625 L505,772 L415,722 L228,750 L215,640 L68,515 L160,375 L132,222 L330,186 Z" fill="url(#lg)" stroke="url(#lg)" stroke-width="10" stroke-linejoin="round"/>
<path d="M664,428C666,411 662,374 655,350C648,326 640,303 624,286C608,269 591,255 562,247C533,239 486,234 450,237C414,240 376,246 347,263C318,280 293,308 275,337C257,366 242,407 239,440C236,473 244,506 257,533C270,560 292,586 316,605C340,624 371,640 400,646C429,652 466,649 492,642C518,635 539,622 556,606C573,590 594,556 592,548C590,540 563,550 545,556C527,562 509,578 485,582C461,586 424,584 402,577C380,570 362,556 350,543C338,530 336,515 333,498C330,481 331,458 335,440C339,422 346,406 357,392C368,378 386,362 404,353C422,344 441,341 462,341C483,341 508,345 528,353C548,361 568,377 583,390C598,403 608,422 617,432C626,442 632,453 640,452C648,451 662,445 664,428Z" fill="#181b1f"/>
<circle cx="458" cy="472" r="86" fill="#181b1f"/>
<path d="M390,518C394,524 404,544 416,552C428,560 449,567 462,566C475,565 487,551 492,548" fill="none" stroke="#f7941d" stroke-width="20" stroke-linecap="round"/>
</g>
<path d="M15.5,64.8H38.5M15.5,71.7H38.5M15.5,78.6H38.5" stroke="#d0d0e0" stroke-width="2.2" stroke-linecap="round" fill="none"/>
<path d="M124.6,69.5l4.3,3.8l-4.3,3.8" stroke="#9c9da8" stroke-width="1.6" fill="none" stroke-linecap="round" stroke-linejoin="round"/>
<path d="M256.4,69.5l4.3,3.8l-4.3,3.8" stroke="#9c9da8" stroke-width="1.6" fill="none" stroke-linecap="round" stroke-linejoin="round"/>
<path d="M400.30,63.60 L403.12,69.32 L409.43,70.23 L404.87,74.68 L405.94,80.97 L400.30,78.00 L394.66,80.97 L395.73,74.68 L391.17,70.23 L397.48,69.32 Z" fill="#eb7b18" stroke="#eb7b18" stroke-width="1" stroke-linejoin="round"/>
<g stroke="#d2d2e2" stroke-width="1.7" fill="none"><circle cx="437.4" cy="72.3" r="2.9"/><circle cx="448.9" cy="66.6" r="2.9"/><circle cx="448.9" cy="77.9" r="2.9"/><path d="M440,71l6.3,-3.1M440,73.6l6.3,3.1"/></g>
<g stroke="#8c8d99" stroke-width="1.6" fill="none" stroke-linecap="round"><circle cx="717.1" cy="21.3" r="6.8"/><path d="M722.1,26.3L725.8,30"/></g>
<g stroke="#8c8d99" fill="none"><rect x="1073" y="17" width="16.2" height="10.2" rx="1.8" stroke-width="1.7"/><path d="M1075.2,20.4h1.6M1078.5,20.4h1.6M1081.9,20.4h1.6M1085.3,20.4h1.6M1075.2,23.8h1.2M1078.3,23.8h5.8M1085.9,23.8h1.2" stroke-width="1.4"/></g>
<path d="M1638,21.4h12.8M1644.4,15v12.8" stroke="#9c9da8" stroke-width="1.7" stroke-linecap="round" fill="none"/>
<path d="M1662.3,19.9L1666.2,24.0L1670.0,19.9" stroke="#9c9da8" stroke-width="1.6" stroke-linecap="round" stroke-linejoin="round" fill="none"/>
<path d="M1692.5,7V37" stroke="#2e3036" stroke-width="1"/>
<circle cx="1720.2" cy="21.2" r="8.6" stroke="#9c9da8" stroke-width="1.6" fill="none"/>
<text x="1720.2" y="25.6" text-anchor="middle" font-family="Liberation Sans,Arial,sans-serif" font-weight="bold" font-size="12.5" fill="#9c9da8">?</text>
<g stroke="#9c9da8" stroke-width="1.9" fill="none" stroke-linecap="round"><circle cx="1763.7" cy="28" r="1.9"/><path d="M1763.7,23.2a4.8,4.8 0 0 1 4.8,4.8M1763.7,18.8a9.2,9.2 0 0 1 9.2,9.2M1763.7,14.4a13.6,13.6 0 0 1 13.6,13.6"/></g>
<clipPath id="av"><circle cx="1816" cy="21.8" r="15.2"/></clipPath>
<circle cx="1816" cy="21.8" r="15.2" fill="#4a680c"/>
<path d="M1804,10h3v3h-3zM1810,10h3v3h-3zM1819,10h3v3h-3zM1825,10h3v3h-3zM1810,13h3v3h-3zM1813,13h3v3h-3zM1816,13h3v3h-3zM1819,13h3v3h-3zM1810,16h3v3h-3zM1819,16h3v3h-3zM1810,19h3v3h-3zM1819,19h3v3h-3zM1804,22h3v3h-3zM1807,22h3v3h-3zM1822,22h3v3h-3zM1825,22h3v3h-3zM1804,25h3v3h-3zM1807,25h3v3h-3zM1813,25h3v3h-3zM1816,25h3v3h-3zM1822,25h3v3h-3zM1825,25h3v3h-3zM1804,28h3v3h-3zM1807,28h3v3h-3zM1810,28h3v3h-3zM1819,28h3v3h-3zM1822,28h3v3h-3zM1825,28h3v3h-3zM1807,31h3v3h-3zM1813,31h3v3h-3zM1816,31h3v3h-3zM1822,31h3v3h-3z" fill="#ff847c" clip-path="url(#av)" shape-rendering="crispEdges"/>
<path d="M1100.3,70.2v7.8M1104.1,67.4v10.6M1107.8,71.2v6.8M1111.7,65.6v12.4" stroke="#6e9fff" stroke-width="2.7" fill="none"/>
<path d="M1113.6,72.5h8.4M1117.8,68.3v8.4" stroke="#181b1f" stroke-width="4.4" fill="none"/><path d="M1114.2,72.5h7.4M1117.9,68.8v7.4" stroke="#ff9830" stroke-width="2.3" fill="none"/>
<path d="M1234.5,70.0L1238.8,74.6L1243.0,70.0" stroke="#6e9fff" stroke-width="1.7" stroke-linecap="round" stroke-linejoin="round" fill="none"/>
<g stroke="#9697a3" stroke-width="1.7" fill="none" stroke-linejoin="round"><path d="M1281.6,64.7h9.4l4.1,4.1v9.5a1.8,1.8 0 0 1 -1.8,1.8h-11.7a1.8,1.8 0 0 1 -1.8,-1.8v-11.8a1.8,1.8 0 0 1 1.8,-1.8z"/><path d="M1283.6,64.9v3.6h6.2v-3.6M1283.3,80v-5.6h8.6v5.6"/></g>
<path d="M1340.66,65.70 L1340.87,63.51 L1343.73,63.51 L1343.94,65.70 L1345.88,66.50 L1347.57,65.10 L1349.60,67.13 L1348.20,68.82 L1349.00,70.76 L1351.19,70.97 L1351.19,73.83 L1349.00,74.04 L1348.20,75.98 L1349.60,77.67 L1347.57,79.70 L1345.88,78.30 L1343.94,79.10 L1343.73,81.29 L1340.87,81.29 L1340.66,79.10 L1338.72,78.30 L1337.03,79.70 L1335.00,77.67 L1336.40,75.98 L1335.60,74.04 L1333.41,73.83 L1333.41,70.97 L1335.60,70.76 L1336.40,68.82 L1335.00,67.13 L1337.03,65.10 L1338.72,66.50 Z" stroke="#9697a3" stroke-width="1.6" fill="none" stroke-linejoin="round"/>
<circle cx="1342.3" cy="72.4" r="3.1" stroke="#9697a3" stroke-width="1.6" fill="none"/>
<g stroke="#9697a3" stroke-width="1.6" fill="none" stroke-linecap="round" stroke-linejoin="round"><circle cx="1396.2" cy="72.4" r="8.6"/><path d="M1396.2,67.2v5.5h-3.6"/></g>
<path d="M1582.3,69.8L1586.2,74.0L1590.2,69.8" stroke="#9c9da8" stroke-width="1.6" stroke-linecap="round" stroke-linejoin="round" fill="none"/>
<g stroke="#9697a3" stroke-width="1.6" fill="none" stroke-linecap="round"><circle cx="1627.3" cy="71.2" r="7.4"/><path d="M1623.3,71.2h8M1632.8,76.8l4.2,4.2"/></g>
<g stroke="#9697a3" stroke-width="1.6" fill="none" stroke-linecap="round" stroke-linejoin="round">
<path d="M1675.88,69.66A8.0,8.0 0 0 1 1690.92,69.66"/>
<path d="M1690.92,75.14A8.0,8.0 0 0 1 1675.88,75.14"/>
<path d="M1674.6,63.6v5.4h5.4M1692.2,81.2v-5.4h-5.4"/>
</g>
<path d="M1756.0,69.8L1760.0,74.0L1764.0,69.8" stroke="#9c9da8" stroke-width="1.6" stroke-linecap="round" stroke-linejoin="round" fill="none"/>
<path d="M1786.5,57V87" stroke="#2e3036" stroke-width="1"/>
<path d="M1806.8,76.2L1813.0,69.8L1819.2,76.2" stroke="#c4c4d4" stroke-width="2.3" stroke-linecap="round" stroke-linejoin="round" fill="none"/>
</svg>
</body>
</html>
